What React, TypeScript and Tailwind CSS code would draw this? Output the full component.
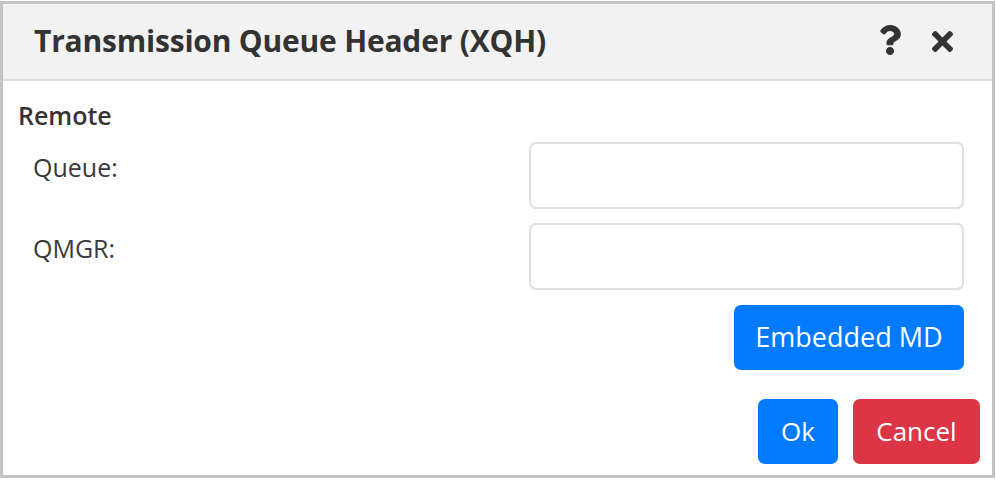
import React from 'react';
import { FaQuestion, FaTimes } from 'react-icons/fa';

const font = { fontFamily: '"Open Sans", "Noto Sans", sans-serif' };

interface FieldRowProps {
    label: string;
}

const FieldRow: React.FC<FieldRowProps> = ({ label }) => (
    <div className="flex items-start">
        <label className="flex-1 pl-[15px] pt-[7px] text-[25px] leading-[36px] text-[#3a3a3a]">{label}</label>
        <input
            type="text"
            className="w-[435px] h-[67px] rounded-[7px] border-2 border-[#dcdfe3] bg-white outline-none"
        />
    </div>
);

const App: React.FC = () => {
    return (
        <div className="bg-white w-[996px] h-[480px] pt-[1px]" style={font}>
            <div className="w-[995px] h-[477px] border-[3px] border-[#c4c4c4] bg-white flex flex-col">
                <div className="h-[77px] flex-shrink-0 bg-[#f2f2f2] border-b-2 border-[#dedede] flex items-center pl-[31px] pr-[39px]">
                    <h2 className="flex-1 text-[30px] font-bold text-[#333] tracking-[-0.2px] -mt-[2px]">
                        Transmission Queue Header (XQH)
                    </h2>
                    <FaQuestion className="w-[24px] h-[30px] text-[#333] mr-[30px] -mt-[4px]" />
                    <FaTimes className="w-[21px] h-[31px] text-[#333]" />
                </div>
                <div className="flex-1 flex flex-col pl-[15px] pr-[28px] pt-[19px]">
                    <div className="text-[25px] leading-[30px] font-semibold text-[#333]">Remote</div>
                    <div className="mt-[12px] flex flex-col gap-[14px]">
                        <FieldRow label="Queue:" />
                        <FieldRow label="QMGR:" />
                    </div>
                    <div className="flex justify-end mt-[15px]">
                        <button className="h-[65px] w-[230px] rounded-[7px] bg-[#007bff] text-white text-[27px]">
                            Embedded MD
                        </button>
                    </div>
                    <div className="flex justify-end gap-[15px] mt-[29px] -mr-[16px]">
                        <button className="h-[65px] w-[80px] rounded-[7px] bg-[#007bff] text-white text-[26px]">Ok</button>
                        <button className="h-[65px] w-[127px] rounded-[7px] bg-[#dc3545] text-white text-[26px]">Cancel</button>
                    </div>
                </div>
            </div>
        </div>
    );
};

export default App;
